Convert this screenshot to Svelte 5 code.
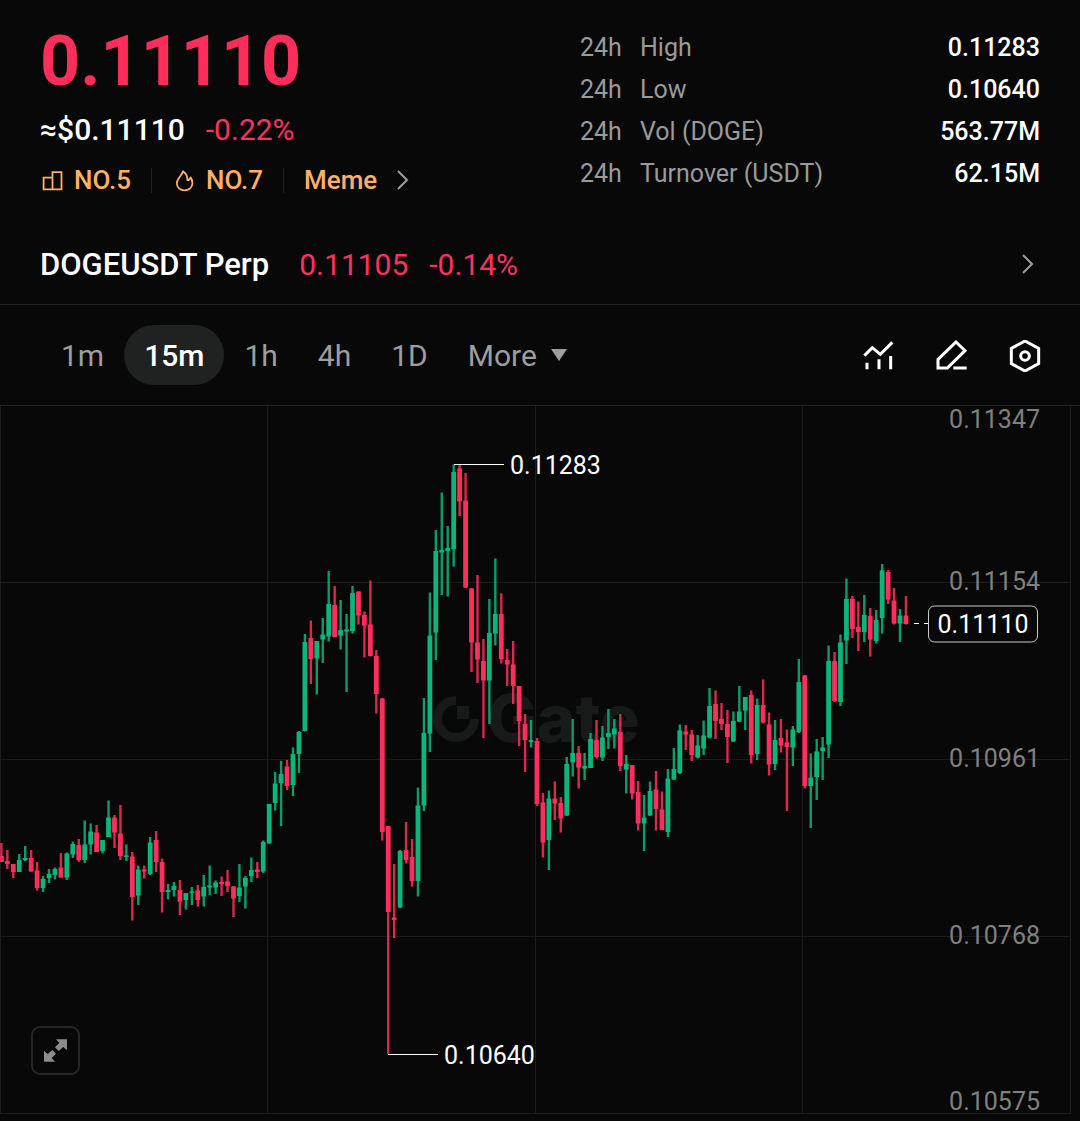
<script lang="ts">
type Candle = [number, number, number, number, number];

const stats = [
    { label: 'High', value: '0.11283' },
    { label: 'Low', value: '0.10640' },
    { label: 'Vol (DOGE)', value: '563.77M' },
    { label: 'Turnover (USDT)', value: '62.15M' }
];

const intervals = ['1m', '15m', '1h', '4h', '1D'];
let active = $state('15m');

const axis = [
    { label: '0.11347', y: 428 },
    { label: '0.11154', y: 590 },
    { label: '0.10961', y: 767 },
    { label: '0.10768', y: 944 },
    { label: '0.10575', y: 1110 }
];

const gridX = [0, 267, 535, 802, 1070];
const gridY = [582, 759, 936, 1113];

const STEP = 5.951;
const START = 1.4;

// up (1) or down (0), wick top, body top, body bottom, wick bottom
const candles: Candle[] = [
    [0, 843, 856, 862, 862], [0, 850, 861, 864, 869], [0, 864, 864, 872, 878], [1, 854, 860, 872, 872],
    [1, 846, 858, 860, 861], [0, 850, 858, 871.5, 871.5], [0, 862, 870.5, 888, 890.5], [1, 876, 879, 888, 892],
    [1, 869, 874, 878, 883], [1, 867.5, 869, 875, 879.5], [0, 853, 867.5, 877.5, 877.5], [1, 852.5, 853.5, 877.5, 880],
    [1, 841.5, 844, 854.5, 858], [0, 839, 845, 860, 862], [1, 820.5, 844.5, 860, 863], [1, 823.5, 831.5, 844.5, 854.5],
    [0, 825, 832.5, 852, 852], [1, 840, 840, 851, 853.5], [1, 800.5, 817.5, 837, 837], [0, 815, 817.5, 832.5, 848],
    [0, 805, 833.5, 856, 860], [1, 844.5, 855.5, 857, 861], [0, 852, 856.5, 897, 920.5], [1, 865.5, 869.5, 895.5, 905],
    [0, 865.5, 869.5, 871.5, 878.5], [1, 837, 842.5, 874, 875], [0, 831, 840, 862, 872], [0, 858.5, 862, 892, 912.5],
    [1, 884, 890, 892, 899.5], [1, 882, 886, 890, 896.5], [0, 880, 890, 901.5, 915], [1, 893, 893, 900, 909.5],
    [1, 887, 891.5, 893, 905], [0, 885, 890.5, 900, 906.5], [1, 875, 887, 896.5, 906.5], [1, 865.5, 885.5, 887.5, 895],
    [1, 880.5, 882.5, 887.5, 894], [0, 876.5, 882, 884, 896], [0, 870, 881.5, 886, 892], [0, 886, 886.5, 898.5, 917],
    [1, 864, 887.5, 896, 902], [1, 876, 878, 886.5, 908.5], [1, 857.5, 870, 876, 882], [0, 862, 869.5, 872, 878],
    [1, 840.5, 842, 871.5, 873], [1, 804, 804, 843.5, 843.5], [1, 772, 783.5, 803, 810.5], [1, 761, 774, 783, 826],
    [0, 760, 766.5, 786, 790], [1, 747.5, 754, 785, 796], [1, 731, 732, 754, 773], [1, 634, 642, 731, 731.5],
    [0, 620.5, 638, 659, 684], [1, 641, 641, 658.5, 694.5], [1, 618, 634.5, 639.5, 663], [1, 571, 604, 636.5, 641.5],
    [0, 586, 605, 637, 637.5], [1, 600, 630, 635.5, 649.5], [1, 614, 629.5, 631.5, 692], [1, 586, 593, 631, 633.5],
    [0, 591.5, 591.5, 615.5, 624.5], [0, 611.5, 615, 625.5, 657.5], [0, 580.5, 624.5, 656, 656.5], [0, 650, 656, 694, 713.5],
    [0, 698, 698.5, 832, 840.5], [0, 826, 826, 912, 1054], [0, 864, 917.5, 920, 938], [1, 850, 851, 907.5, 908],
    [0, 822, 850, 860, 863.5], [0, 839, 857, 881, 886.5], [1, 787.5, 805.5, 881, 896.5], [1, 698, 733, 805.5, 811],
    [1, 592.5, 635.5, 733.5, 752], [1, 530, 551, 632.5, 660], [1, 492.5, 550, 552.5, 595], [1, 526, 548, 551, 596.5],
    [1, 464.5, 472, 549, 566.5], [0, 465, 468.5, 501.5, 516], [0, 473, 500.5, 587.5, 588], [0, 588, 588.5, 642.5, 672],
    [0, 575, 642.5, 659.5, 683], [0, 639, 661, 680.5, 738], [1, 599, 633, 680.5, 724], [1, 558.5, 614, 633.5, 645.5],
    [0, 593.5, 614, 659, 663.5], [0, 649, 660, 664.5, 686], [0, 641, 664.5, 686, 704], [0, 686, 686, 721, 746],
    [0, 714, 724, 740, 772], [1, 720, 740, 742, 747.5], [0, 738, 741, 804, 806], [0, 793, 802.5, 842.5, 857.5],
    [1, 790.5, 798.5, 840, 870], [0, 781.5, 798.5, 803.5, 820], [0, 797, 803, 818.5, 832.5], [1, 757, 764, 815.5, 816],
    [1, 719, 753, 762.5, 776.5], [0, 746, 753, 767.5, 788.5], [1, 753, 766, 768.5, 780], [1, 733, 739, 768, 768],
    [0, 720, 740, 757, 758.5], [1, 726, 737.5, 757.5, 761], [1, 709, 733, 737, 749], [1, 719, 728.5, 734.5, 748.5],
    [0, 714, 732, 766, 771], [1, 755, 764, 769.5, 793.5], [0, 765, 765, 793.5, 799.5], [0, 781, 792, 823.5, 830.5],
    [1, 795, 817.5, 823.5, 851], [1, 781.5, 791, 815.5, 816], [0, 771, 789.5, 809, 830.5], [0, 791.5, 809.5, 830, 830],
    [1, 769, 778.5, 832, 837], [1, 748, 769, 779.5, 780], [1, 724.5, 730.5, 773, 774], [0, 725, 731.5, 734.5, 750],
    [0, 730, 734.5, 755, 761], [1, 735, 745.5, 757.5, 758.5], [1, 720.5, 735.5, 748.5, 755], [1, 688, 706, 737.5, 738.5],
    [0, 690.5, 704, 721, 739], [0, 703, 719, 724, 730], [0, 710, 724, 737, 763], [1, 711.5, 721, 741.5, 742],
    [1, 686, 711.5, 721.5, 722], [1, 697, 697, 710.5, 730], [0, 690.5, 695, 755, 763.5], [1, 698.5, 705, 754, 760],
    [0, 679.5, 705, 722.5, 723.5], [0, 712.5, 724.5, 764.5, 775.5], [1, 720, 740, 764, 770], [0, 719, 738, 745.5, 752.5],
    [0, 729.5, 742.5, 747, 811], [1, 726, 729.5, 747.5, 766], [1, 659, 682, 732, 733], [0, 675, 675.5, 786, 788.5],
    [1, 753.5, 777.5, 786, 828], [1, 739, 751.5, 777, 800], [1, 737, 747.5, 751, 780], [1, 645.5, 661, 744.5, 758],
    [0, 652, 661, 701, 702], [1, 634.5, 642.5, 702, 706], [1, 578.5, 599, 640.5, 664], [0, 596, 599, 629, 638],
    [0, 601.5, 627, 632, 651], [1, 595, 615, 632, 642], [0, 608, 616, 639.5, 656.5], [1, 610, 620, 641, 643.5],
    [1, 564, 570.5, 618, 633.5], [0, 570, 572, 599.5, 604], [0, 588, 600.5, 623.5, 624.5], [1, 609, 615.5, 623.5, 642],
    [0, 596, 615.5, 624, 624.5]
];
</script>

<main>
    <header class="summary">
        <div>
            <div class="price">0.11110</div>
            <div class="fiat">
                <span>≈$0.11110</span>
                <span class="down">-0.22%</span>
            </div>
            <nav class="tags">
                <a class="tag" href="#rank">
                    <svg width="24" height="24" viewBox="0 0 24 24" fill="none" stroke="currentColor" stroke-width="1.8">
                        <path d="M12.5 9.7H3.6V21.4H12.5M12.5 4.2H21.5V21.4H12.5Z" />
                    </svg>
                    NO.5
                </a>
                <a class="tag" href="#hot">
                    <svg width="24" height="24" viewBox="0 0 24 24" fill="none" stroke="currentColor" stroke-width="1.8" stroke-linejoin="round">
                        <path d="M11 3.2C10.4 7.6 4.8 10.2 4.8 15.2C4.8 19.4 8.2 22.4 12.6 22.4S20.4 19.4 20.4 15.2C20.4 12.6 19.8 11 18.6 9.4C18 11.4 17 12.2 15.4 12.2C15.6 8.2 13.8 5.2 11 3.2Z" />
                    </svg>
                    NO.7
                </a>
                <a class="tag" href="#meme">
                    Meme
                    <svg class="chevron" width="12" height="20" viewBox="0 0 12 20">
                        <path d="M1 1L10 10L1 19" />
                    </svg>
                </a>
            </nav>
        </div>
        <dl class="stats">
            {#each stats as stat}
                <div class="stat">
                    <dt><span class="period">24h</span>{stat.label}</dt>
                    <dd>{stat.value}</dd>
                </div>
            {/each}
        </dl>
    </header>

    <a class="perp" href="#perp">
        <span class="pair">DOGEUSDT Perp</span>
        <span class="down">0.11105</span>
        <span class="down change">-0.14%</span>
        <svg class="chevron" width="20" height="20" viewBox="0 0 20 20">
            <path d="M3 1L12 10L3 19" />
        </svg>
    </a>

    <div class="toolbar">
        <div class="intervals">
            {#each intervals as name}
                <button class:active={active === name} onclick={() => (active = name)}>{name}</button>
            {/each}
            <button class="more">
                More
                <svg width="16" height="12" viewBox="0 0 16 12"><path d="M0 0H16L8 12Z" fill="currentColor" /></svg>
            </button>
        </div>
        <div class="tools">
            <button aria-label="Indicators">
                <svg width="32" height="32" viewBox="0 0 96 96" fill="none" stroke="currentColor" stroke-width="9">
                    <path d="M4 47L28 23L52 43L88 7M12 68V88M48 58V88M83 48V88" />
                </svg>
            </button>
            <button aria-label="Draw">
                <svg width="32" height="32" viewBox="0 0 96 96" fill="none" stroke="currentColor" stroke-width="9">
                    <path d="M60 6L87 32L34 84H6V58ZM52 84H92" />
                </svg>
            </button>
            <button aria-label="Settings">
                <svg width="32" height="32" viewBox="0 0 96 96" fill="none" stroke="currentColor" stroke-width="9">
                    <path d="M48 3L89 25V71L48 93L7 71V25Z" />
                    <circle cx="48" cy="48" r="13" />
                </svg>
            </button>
        </div>
    </div>

    <section class="chart">
        <svg class="plot" viewBox="0 406 1080 715" role="img" aria-label="DOGE price, 15 minute candles">
            <g class="grid">
                {#each gridX as x}
                    <rect {x} y="406" width="1" height="708" />
                {/each}
                {#each gridY as y}
                    <rect x="0" {y} width="1070" height="1" />
                {/each}
            </g>

            <g class="watermark">
                <path class="ring" d="M456 700.5A18.5 18.5 0 1 0 474.5 719" />
                <rect x="457" y="706" width="12" height="13" />
                <text x="487" y="742">Gate</text>
            </g>

            {#each candles as [up, high, top, bottom, low], i}
                <g class={up ? 'rise' : 'fall'}>
                    <rect class="wick" x={START + i * STEP - 1.2} y={high} width="2.4" height={low - high} />
                    <rect x={START + i * STEP - 2.4} y={top} width="4.8" height={bottom - top} />
                </g>
            {/each}

            <g class="axis">
                {#each axis as tick}
                    <text x="1040" y={tick.y}>{tick.label}</text>
                {/each}
            </g>

            <g class="marks">
                <path d="M454 464.5H504M388 1054.5H438" />
                <path d="M914 623.5H928" stroke-dasharray="5 5" />
                <text x="510" y="474">0.11283</text>
                <text x="444" y="1064">0.10640</text>
                <rect x="928.5" y="606" width="109" height="36" rx="6" />
                <text x="983" y="633" text-anchor="middle">0.11110</text>
            </g>
        </svg>
        <button class="expand" aria-label="Full screen">
            <svg width="23" height="23" viewBox="0 0 69 69" fill="currentColor">
                <path d="M36 1H69V34L58 24L44 36L33 25L46 12Z" />
                <path d="M33 68H0V35L11 45L25 33L36 44L23 57Z" />
            </svg>
        </button>
    </section>
</main>

<style>
:global(body) {
    margin: 0;
    background: #080808;
}

main {
    font-family: Roboto, "Liberation Sans", sans-serif;
    font-size: 25px;
    color: #fff;
}

a {
    color: inherit;
    text-decoration: none;
}

button {
    padding: 0;
    border: 0;
    background: none;
    color: inherit;
    font: inherit;
    cursor: pointer;
}

svg {
    display: block;
}

.summary {
    display: grid;
    grid-template-columns: 1fr 1fr;
    gap: 80px;
    padding: 26px 40px;
}

.price {
    font-size: 70px;
    font-weight: 700;
    line-height: 70px;
    color: #ff2d5a;
}

.fiat {
    display: flex;
    gap: 21px;
    margin-top: 16px;
    font-size: 30px;
    font-weight: 500;
    line-height: 36px;
}

.down {
    font-weight: 400;
    color: #ff3163;
}

.tags {
    display: flex;
    align-items: center;
    height: 36px;
    margin-top: 14px;
}

.tag {
    display: flex;
    align-items: center;
    gap: 10px;
    height: 25px;
    font-weight: 500;
    font-size: 26px;
    color: #ffb06a;
}

.tag + .tag {
    margin-left: 20px;
    padding-left: 20px;
    border-left: 1px solid #222;
}

.tag:last-child {
    gap: 20px;
}

.chevron {
    fill: none;
    stroke: #9e9e9e;
    stroke-width: 2;
}

.stats {
    margin: 0;
    padding-top: 1px;
}

.stat {
    display: flex;
    justify-content: space-between;
    line-height: 42px;
}

dt {
    display: flex;
    color: #9a9a9a;
}

dd {
    margin: 0;
    font-weight: 500;
}

.period {
    width: 60px;
}

.perp {
    display: flex;
    align-items: center;
    height: 80px;
    padding: 0 40px;
    border-bottom: 1px solid #222;
    font-size: 30px;
}

.pair {
    margin-right: 30px;
    font-size: 31px;
    font-weight: 500;
}

.change {
    margin-left: 21px;
}

.perp .chevron {
    margin-left: auto;
}

.toolbar {
    display: flex;
    align-items: center;
    justify-content: space-between;
    height: 100px;
    padding: 0 39px 0 41px;
    border-bottom: 1px solid #222;
}

.intervals {
    display: flex;
    font-size: 30px;
    color: #9e9e9e;
}

.intervals button {
    height: 60px;
    padding: 0 20px;
    border-radius: 30px;
}

.intervals .active {
    background: #202121;
    color: #fff;
    font-weight: 500;
}

.intervals .more {
    display: flex;
    align-items: center;
    gap: 14px;
}

.tools {
    display: flex;
    gap: 41px;
    padding-top: 2px;
}

.chart {
    position: relative;
}

.plot {
    width: 100%;
    height: auto;
}

.grid {
    fill: #1c1c1c;
}

.watermark {
    fill: #181919;
    font: 800 66px Inter, sans-serif;
}

.ring {
    fill: none;
    stroke: #181919;
    stroke-width: 9;
}

.rise {
    fill: #0bb67c;
}

.fall {
    fill: #ff2e5c;
}

.wick {
    opacity: 0.85;
}

.axis {
    fill: #808080;
    text-anchor: end;
}

.marks {
    fill: #fff;
}

.marks path {
    stroke: #fff;
}

.marks rect {
    fill: #080808;
    stroke: #ccc;
}

.expand {
    position: absolute;
    left: 31px;
    bottom: 46px;
    display: grid;
    place-items: center;
    width: 49px;
    height: 49px;
    border: 2px solid #272727;
    border-radius: 9px;
    color: #8c8c8c;
}
</style>
